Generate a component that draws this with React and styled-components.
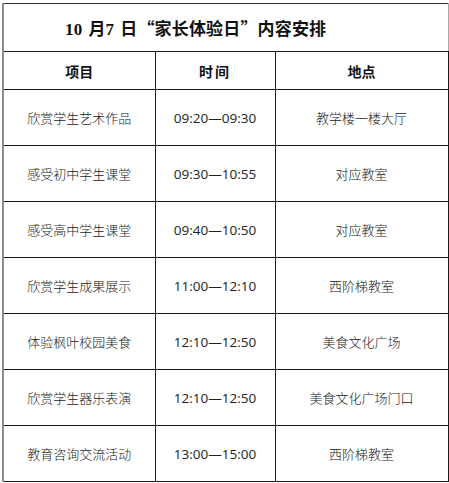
import React from "react";
import styled, { createGlobalStyle } from "styled-components";

const Global = createGlobalStyle`
  html, body { margin: 0; padding: 0; background: #fff; }
  body { font-family: "Noto Sans CJK SC", sans-serif; color: #222; }
`;

const Table = styled.table`
  border-collapse: collapse;
  margin: 3px 0 0 2px;
  table-layout: fixed;
  width: 445px;
  border-left: 2px solid #8c8c8c;
`;

const Col = styled.col`
  width: ${(p) => p.$w}px;
`;

const TitleCell = styled.td`
  height: 47px;
  padding: 0 0 0 61px;
  border-top: 1px solid #333;
  border-right: 1px solid #a8a8a8;
  border-bottom: 1px solid #1a1a1a;
  font-family: "Liberation Serif", "Noto Sans CJK SC", serif;
  font-weight: bold;
  font-size: 17px;
  letter-spacing: 0.2px;
  color: #111;
  text-align: left;
  vertical-align: middle;
  white-space: nowrap;
`;

const Han = styled.span`
  font-family: "Noto Sans CJK SC", sans-serif;
  margin-left: ${(p) => p.$ml || 0}px;
`;

const Quote = styled.span`
  display: inline-block;
  width: 1em;
  text-align: ${(p) => (p.$open ? "right" : "left")};
  font-family: "Noto Sans CJK SC", sans-serif;
`;

const HeadCell = styled.th`
  height: 37px;
  padding: 0;
  border: 1px solid #1a1a1a;
  border-left: ${(p) => (p.$first ? "none" : "1px solid #1a1a1a")};
  font-family: "Noto Sans CJK SC", sans-serif;
  font-weight: bold;
  font-size: 14px;
  letter-spacing: ${(p) => p.$ls || 0}px;
  color: #111;
  text-align: center;
  vertical-align: middle;
`;

const Cell = styled.td`
  height: 55px;
  padding: 0;
  border: 1px solid #1a1a1a;
  border-left: ${(p) => (p.$first ? "none" : "1px solid #1a1a1a")};
  font-family: ${(p) =>
    p.$num
      ? `"Open Sans", "Liberation Sans", sans-serif`
      : `"Noto Sans CJK SC", sans-serif`};
  font-size: ${(p) => (p.$num ? "13.5px" : "13px")};
  font-weight: ${(p) => (p.$num ? 400 : 300)};
  color: #222;
  text-align: center;
  vertical-align: middle;
`;

const rows = [
  ["欣赏学生艺术作品", "09:20—09:30", "教学楼一楼大厅"],
  ["感受初中学生课堂", "09:30—10:55", "对应教室"],
  ["感受高中学生课堂", "09:40—10:50", "对应教室"],
  ["欣赏学生成果展示", "11:00—12:10", "西阶梯教室"],
  ["体验枫叶校园美食", "12:10—12:50", "美食文化广场"],
  ["欣赏学生器乐表演", "12:10—12:50", "美食文化广场门口"],
  ["教育咨询交流活动", "13:00—15:00", "西阶梯教室"],
];

export default function App() {
  return (
    <>
      <Global />
      <Table>
        <colgroup>
          <Col $w={152} />
          <Col $w={120} />
          <Col $w={173} />
        </colgroup>
        <tbody>
          <tr>
            <TitleCell colSpan={3}>
              10<Han $ml={6}>月</Han>7<Han $ml={6}>日</Han>
              <Quote $open>“</Quote>
              <Han>家长体验日</Han>
              <Quote>”</Quote>
              <Han>内容安排</Han>
            </TitleCell>
          </tr>
          <tr>
            <HeadCell $first>项目</HeadCell>
            <HeadCell $ls={2}>时间</HeadCell>
            <HeadCell>地点</HeadCell>
          </tr>
          {rows.map((r, i) => (
            <tr key={i}>
              <Cell $first>{r[0]}</Cell>
              <Cell $num>{r[1]}</Cell>
              <Cell>{r[2]}</Cell>
            </tr>
          ))}
        </tbody>
      </Table>
    </>
  );
}
